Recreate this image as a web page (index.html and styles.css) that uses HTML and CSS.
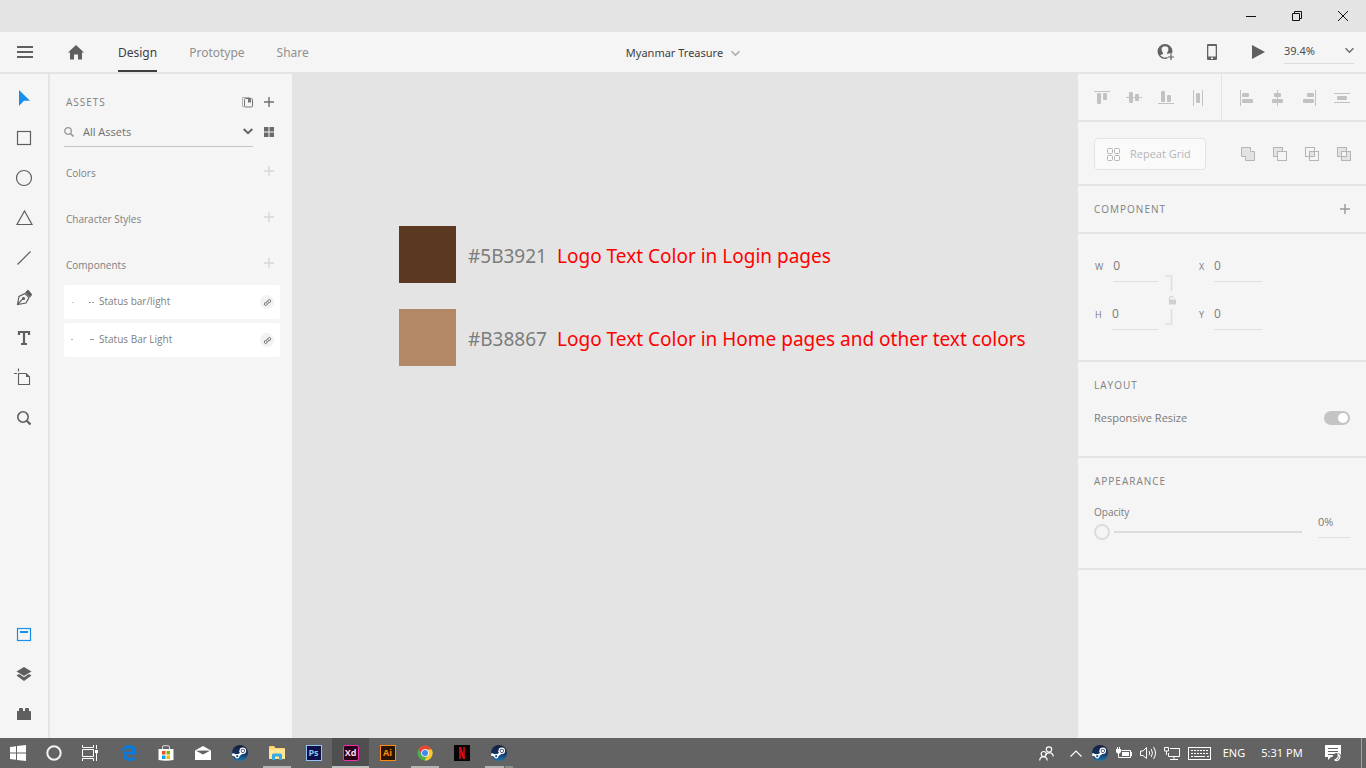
FILE: index.html
```html
<!DOCTYPE html>
<html lang="en">
<head>
<meta charset="utf-8">
<title>Myanmar Treasure</title>
<link rel="stylesheet" href="styles.css">
</head>
<body>
<svg class="defs" aria-hidden="true">
  <defs>
    <linearGradient id="steam-bg" x1="0" y1="0" x2="0" y2="1"><stop offset="0" stop-color="#16203c"/><stop offset=".5" stop-color="#14315f"/><stop offset="1" stop-color="#1a78b0"/></linearGradient>
    <symbol id="steam" viewBox="0 0 16 16">
      <circle cx="8" cy="8" r="8" fill="url(#steam-bg)"/>
      <path d="M0.2 9.2 5.2 11.2 9.6 8.2 8.2 5.6" fill="none" stroke="#fff" stroke-width="2.4"/>
      <circle cx="10.8" cy="5.8" r="3.3" fill="#fff"/><circle cx="10.8" cy="5.8" r="2.1" fill="#1b2c50"/><circle cx="10.8" cy="5.8" r="1.4" fill="#fff"/>
      <circle cx="5.2" cy="11.2" r="2.2" fill="#fff"/><circle cx="5.2" cy="11.2" r="1.1" fill="#1a5288"/>
    </symbol>
    <symbol id="plus" viewBox="0 0 10 10"><path d="M5 0V10M0 5H10" fill="none" stroke="currentColor" stroke-width="1.4"/></symbol>
    <symbol id="chevron" viewBox="0 0 8 6"><path d="M.5 1 4 4.6 7.500 1" fill="none" stroke="currentColor" stroke-width="1.3"/></symbol>
    <symbol id="link" viewBox="0 0 10 10"><g fill="none" stroke="#6e6e6e" stroke-width="1.1" stroke-linecap="round"><path d="M4.200 6 3.700 4.800 5.800 2.300Q7 1 8.100 2.100 9.200 3.200 8 4.400L7.200 5.300"/><path d="M5.800 4 6.300 5.200 4.200 7.700Q3 9 1.900 7.900 .8 6.800 2 5.600L2.800 4.700"/></g></symbol>
  </defs>
</svg>

<div class="app">
  <header class="titlebar">
    <button class="win-btn" aria-label="Minimize"><svg width="10" height="10"><path d="M0 5.500H10" stroke="#111" fill="none"/></svg></button>
    <button class="win-btn" aria-label="Restore"><svg width="10" height="10"><path d="M.5 2.500H7.500V9.500H.5ZM2.500 2.500V.5H9.500V7.500H7.500" stroke="#111" fill="none"/></svg></button>
    <button class="win-btn" aria-label="Close"><svg width="10" height="10"><path d="M0 0 10 10M10 0 0 10" stroke="#111" fill="none"/></svg></button>
  </header>

  <nav class="topbar">
    <div class="topbar-left">
      <button class="icon-btn menu-btn" aria-label="Menu"><svg width="16" height="12"><path d="M0 1H16M0 6H16M0 11H16" stroke="#5f5f5f" stroke-width="2"/></svg></button>
      <button class="icon-btn home-btn" aria-label="Home"><svg width="16" height="15"><path d="M8 0 16 7.500H14V14.500H10V9.500H6V14.500H2V7.500H0Z" fill="#5f5f5f"/></svg></button>
      <a class="tab active" href="#design">Design</a>
      <a class="tab" href="#prototype">Prototype</a>
      <a class="tab" href="#share">Share</a>
    </div>
    <button class="doc-title">Myanmar Treasure <svg class="soft" width="9" height="7"><use href="#chevron"/></svg></button>
    <div class="topbar-right">
      <button class="icon-btn" aria-label="Invite"><svg width="18" height="17"><circle cx="8" cy="7.500" r="6.800" fill="none" stroke="#636363" stroke-width="1.300"/><path d="M2.500 12Q4 10.500 6 10L6 9Q4.500 7.500 4.600 5 4.800 2.200 8 2.200 11.200 2.200 11.400 5 11.500 7.500 10 9V10Q12 10.500 13.500 12Q15.500 9.500 15 7 14 .7 8 .7 1.500 1 1.200 7 1 10 2.500 12" fill="#636363"/><path d="M10.500 9.500H18V17H10.500Z" fill="#f5f5f5"/><path d="M14 10V16M11 13H17" stroke="#636363" stroke-width="1.200"/></svg></button>
      <button class="icon-btn" aria-label="Device preview"><svg width="10" height="16"><path fill="#636363" fill-rule="evenodd" d="M1 0H9Q10 0 10 1V15Q10 16 9 16H1Q0 16 0 15V1Q0 0 1 0M1.300 2V12.500H8.700V2ZM4 13.500V15H6V13.500Z"/></svg></button>
      <button class="icon-btn" aria-label="Play"><svg width="13" height="14"><path d="M0 0 13 7 0 14Z" fill="#5f5f5f"/></svg></button>
      <div class="zoom">
        <select aria-label="Zoom level"><option>39.4%</option></select>
        <svg width="9" height="7"><use href="#chevron"/></svg>
      </div>
    </div>
  </nav>

  <div class="workspace">
    <aside class="tools">
      <button aria-label="Select"><svg width="24" height="24"><path d="M7 4 18 14.800 12 14.800 7 20Z" fill="#1790eb"/></svg></button>
      <button aria-label="Rectangle"><svg width="24" height="24"><rect x="5.500" y="5.500" width="13" height="13"/></svg></button>
      <button aria-label="Ellipse"><svg width="24" height="24"><circle cx="12" cy="12" r="7.500"/></svg></button>
      <button aria-label="Polygon"><svg width="24" height="24"><path d="M12.500 5 20 18.500H5Z"/></svg></button>
      <button aria-label="Line"><svg width="24" height="24"><path d="M5.500 18.500 18.500 5.500"/></svg></button>
      <button aria-label="Pen"><svg width="24" height="24"><path d="M5.500 18.500 7 10.500 13 7.500 17 11.500 14 17ZM5.500 18.500 11 12.700"/><circle cx="11.500" cy="12.500" r="1" fill="#5f5f5f"/><path d="M14 6.500 16 4.500 19.500 8.500 18 10.500Z" fill="#5f5f5f"/></svg></button>
      <button aria-label="Text"><svg width="24" height="24"><path d="M7 9V6H17V9M12 6V18M9 18H15" stroke-width="2.200"/></svg></button>
      <button aria-label="Artboard"><svg width="24" height="24"><path d="M6.500 7.500H14L17.500 11V18.500H6.500ZM6.500 2.500V5.500M2 7.500H5" stroke-width="1.100"/><path d="M14 7V11H18Z" fill="#5f5f5f" stroke="none"/></svg></button>
      <button aria-label="Zoom"><svg width="24" height="24"><circle cx="11" cy="11" r="5.200" stroke-width="1.600"/><path d="M14.800 14.800 18.500 18.500" stroke-width="2.200"/></svg></button>
      <span class="spacer"></span>
      <button aria-label="Assets"><svg width="24" height="24"><rect x="5.500" y="6.500" width="13" height="12" stroke="#1790eb"/><path d="M8 10H16" stroke="#1790eb" stroke-width="2"/></svg></button>
      <button aria-label="Layers"><svg width="24" height="24"><path d="M12 5 19.500 9.500 12 14 4.500 9.500ZM4.500 13.500 7 12 12 15.200 17 12 19.500 13.500 12 19Z" fill="#5f5f5f" stroke="none"/></svg></button>
      <button aria-label="Plugins"><svg width="24" height="24"><path d="M5 9H7V7Q7 6 8 6H10Q11 6 11 7V9H13V7Q13 6 14 6H16Q17 6 17 7V9H18Q19 9 19 10V18H5Z" fill="#5f5f5f" stroke="none"/></svg></button>
    </aside>

    <section class="assets">
      <div class="assets-head">
        <h2>ASSETS</h2>
        <button class="icon-btn" aria-label="Libraries"><svg width="11" height="11"><path d="M2 10H1Q.5 10 .5 9V1Q.5 .5 1 .5H8" fill="none" stroke="#b0b0b0"/><rect x="2.500" y="1.500" width="8" height="8.500" rx="1" fill="none" stroke="#767676"/><path d="M6 2H9V6L7.500 5 6 6Z" fill="#767676"/></svg></button>
        <button class="icon-btn" aria-label="Add asset"><svg width="10" height="10"><use href="#plus"/></svg></button>
      </div>
      <div class="search-row">
        <div class="search">
          <svg width="10" height="10"><circle cx="4" cy="4" r="3.300" fill="none" stroke="#999" stroke-width="1.300"/><path d="M6.500 6.500 9.500 9.500" stroke="#999" stroke-width="1.600"/></svg>
          <input type="text" value="All Assets" aria-label="Filter assets">
          <button class="icon-btn" aria-label="Asset types"><svg width="10" height="7"><path d="M.7 1 5 5.200 9.300 1" fill="none" stroke="#666" stroke-width="2"/></svg></button>
        </div>
        <button class="icon-btn view" aria-label="Grid view"><svg width="10" height="10" fill="#6a6a6a"><path d="M0 0H4.500V4.500H0ZM5.500 0H10V4.500H5.500ZM0 5.500H4.500V10H0ZM5.500 5.500H10V10H5.500Z"/></svg></button>
      </div>
      <div class="asset-group"><h3>Colors</h3><button class="icon-btn" aria-label="Add color"><svg width="10" height="10"><use href="#plus"/></svg></button></div>
      <div class="asset-group"><h3>Character Styles</h3><button class="icon-btn" aria-label="Add character style"><svg width="10" height="10"><use href="#plus"/></svg></button></div>
      <div class="asset-group"><h3>Components</h3><button class="icon-btn" aria-label="Add component"><svg width="10" height="10"><use href="#plus"/></svg></button></div>
      <ul class="components">
        <li><svg width="26" height="8"><path d="M2 4.500H4" stroke="#ccc"/><path d="M19 4.500H21M22 4.500H24" stroke="#999"/></svg><span>Status bar/light</span><i class="badge"><svg width="9" height="9"><use href="#link"/></svg></i></li>
        <li><svg width="26" height="8"><path d="M1 3.500H3" stroke="#aaa"/><path d="M20 3.500H24" stroke="#999"/></svg><span>Status Bar Light</span><i class="badge"><svg width="9" height="9"><use href="#link"/></svg></i></li>
      </ul>
    </section>

    <main class="canvas">
      <div class="swatch-row"><span class="swatch dark"></span><span class="hex">#5B3921</span><span class="note">Logo Text Color in Login pages</span></div>
      <div class="swatch-row"><span class="swatch tan"></span><span class="hex">#B38867</span><span class="note">Logo Text Color in Home pages and other text colors</span></div>
    </main>

    <aside class="inspector">
      <div class="align">
        <div class="align-set">
          <button aria-label="Align top"><svg width="16" height="16"><path d="M0 1.500H16"/><rect x="3" y="3" width="4" height="11" rx="1"/><rect x="9" y="3" width="4" height="7" rx="1"/></svg></button>
          <button aria-label="Align middle"><svg width="16" height="16"><path d="M0 7.500H16"/><rect x="3" y="2" width="4" height="11" rx="1"/><rect x="9" y="4" width="4" height="7" rx="1"/></svg></button>
          <button aria-label="Align bottom"><svg width="16" height="16"><path d="M0 13.500H16"/><rect x="3" y="1" width="4" height="11" rx="1"/><rect x="9" y="5" width="4" height="7" rx="1"/></svg></button>
          <button aria-label="Distribute horizontally"><svg width="16" height="16"><path d="M3.500 0V16M12.500 0V16"/><rect x="6" y="3" width="4" height="10" rx="1"/></svg></button>
        </div>
        <div class="align-set">
          <button aria-label="Align left"><svg width="16" height="16"><path d="M2.500 0V16"/><rect x="4" y="3" width="7" height="4" rx="1"/><rect x="4" y="9" width="11" height="4" rx="1"/></svg></button>
          <button aria-label="Align center"><svg width="16" height="16"><path d="M7.500 0V16"/><rect x="4" y="3" width="7" height="4" rx="1"/><rect x="2" y="9" width="11" height="4" rx="1"/></svg></button>
          <button aria-label="Align right"><svg width="16" height="16"><path d="M13.500 0V16"/><rect x="5" y="3" width="7" height="4" rx="1"/><rect x="1" y="9" width="11" height="4" rx="1"/></svg></button>
          <button aria-label="Distribute vertically"><svg width="16" height="16"><path d="M0 3.500H16M0 12.500H16"/><rect x="3" y="6" width="10" height="4" rx="1"/></svg></button>
        </div>
      </div>
      <div class="repeat">
        <button class="repeat-btn"><svg width="13" height="13" fill="none" stroke="#b5b5b5"><rect x=".5" y=".5" width="5" height="5" rx="1"/><rect x="7.500" y=".5" width="5" height="5" rx="1"/><rect x=".5" y="7.500" width="5" height="5" rx="1"/><rect x="7.500" y="7.500" width="5" height="5" rx="1"/></svg>Repeat Grid</button>
        <div class="bool">
          <button aria-label="Add"><svg width="14" height="14"><path d="M.5 .5H9.500V4.500H13.500V13.500H4.500V9.500H.5Z" fill="#e3e3e3"/></svg></button>
          <button aria-label="Subtract"><svg width="14" height="14"><rect x=".5" y=".5" width="9" height="9" fill="#e3e3e3"/><rect x="4.500" y="4.500" width="9" height="9" fill="#f5f5f5"/></svg></button>
          <button aria-label="Intersect"><svg width="14" height="14"><rect x=".5" y=".5" width="9" height="9" fill="none"/><rect x="4.500" y="4.500" width="9" height="9" fill="none"/><rect x="4.500" y="4.500" width="5" height="5" fill="#e3e3e3"/></svg></button>
          <button aria-label="Exclude overlap"><svg width="14" height="14"><rect x=".5" y=".5" width="9" height="9" fill="#e3e3e3"/><rect x="4.500" y="4.500" width="9" height="9" fill="#e3e3e3"/><rect x="4.500" y="4.500" width="5" height="5" fill="#f5f5f5"/></svg></button>
        </div>
      </div>
      <div class="component"><h2>COMPONENT</h2><button class="icon-btn mid" aria-label="Make component"><svg width="10" height="10"><use href="#plus"/></svg></button></div>
      <div class="transform">
        <div class="fields size">
          <div class="field"><label for="w">W</label><input id="w" type="text" value="0"></div>
          <div class="field"><label for="h">H</label><input id="h" type="text" value="0"></div>
        </div>
        <button class="icon-btn lock" aria-label="Lock aspect"><svg width="12" height="50" fill="none" stroke="#dedede"><path d="M1 1H7.500V16M7.500 34V49H1" stroke-width="1.600"/><path d="M5.500 25V22.500Q5.500 21.500 7.500 21.500 9.500 21.500 9.500 23" stroke="#d0d0d0"/><path d="M5 24.500H12V29.500H5Z" fill="#d0d0d0" stroke="none"/></svg></button>
        <div class="fields">
          <div class="field"><label for="x">X</label><input id="x" type="text" value="0"></div>
          <div class="field"><label for="y">Y</label><input id="y" type="text" value="0"></div>
        </div>
      </div>
      <div class="layout">
        <h2>LAYOUT</h2>
        <div class="resize-row"><label for="resize">Responsive Resize</label><input id="resize" class="toggle" type="checkbox" checked></div>
      </div>
      <div class="appearance">
        <h2>APPEARANCE</h2>
        <div class="opacity">
          <div class="opacity-slider"><label for="opacity">Opacity</label><input id="opacity" type="range" min="0" max="100" value="0"></div>
          <input class="opacity-value" type="text" value="0%" aria-label="Opacity value">
        </div>
      </div>
    </aside>
  </div>

  <footer class="taskbar">
    <div class="system">
      <button aria-label="Start"><svg width="16" height="16" fill="#fff"><path d="M0 2 6 1.200V7.500H0ZM7 1 16 0V7.500H7ZM0 8.500H6V14.800L0 14ZM7 8.500H16V16L7 15Z"/></svg></button>
      <button aria-label="Cortana"><svg width="16" height="16"><circle cx="8" cy="8" r="6.700" fill="none" stroke="#f2f2f2" stroke-width="2"/></svg></button>
      <button aria-label="Task view"><svg width="16" height="16" fill="none" stroke="#fff"><path d="M.5 0V2.500H11.500V0M.5 16V13.500H11.500V16M.5 4.500H11.500V11.500H.5ZM14.500 0V4M14.500 8V16"/><path d="M13 5H16V8H13Z" fill="#fff" stroke="none"/></svg></button>
    </div>
    <div class="apps">
      <button aria-label="Edge"><svg width="16" height="16"><path d="M0 7.500Q1 0 8.200 0 15.500 .3 15.500 7V9.500H5Q5.200 13 9.500 13 12 13 14.500 11.700V14.800Q12 16 8.500 16 2.300 15.500 2.200 10.200 2.300 6 6.500 4.200 5.300 5.500 5 6.800H10.800Q10.800 3.500 7.500 3.500 3 3.600 0 7.500Z" fill="#0a7bdc"/></svg></button>
      <button aria-label="Store"><svg width="16" height="16"><path d="M4.500 4V2Q4.500 .7 6 .7H10Q11.500 .7 11.500 2V4" fill="none" stroke="#ddd"/><path d="M.5 4H15.500V15Q8 16.500 .5 15Z" fill="#fff"/><path d="M4 6H7.500V9.500H4Z" fill="#f25022"/><path d="M8.500 6H12V9.500H8.500Z" fill="#7fba00"/><path d="M4 10.500H7.500V14H4Z" fill="#00a4ef"/><path d="M8.500 10.500H12V14H8.500Z" fill="#ffb900"/></svg></button>
      <button aria-label="Mail"><svg width="16" height="14"><path d="M0 4.500 8 0 16 4.500V14H0Z" fill="#fff"/><path d="M1 4.800 8 8.500 15 4.800 10 4.500Z" fill="#636363"/></svg></button>
      <button aria-label="Steam"><svg width="16" height="16"><use href="#steam"/></svg></button>
      <button class="open" aria-label="File Explorer"><svg width="16" height="14"><path d="M0 1Q0 0 1 0H5L6.500 2H15Q16 2 16 3V13H0Z" fill="#ffd66e"/><path d="M0 3H16V13H0Z" fill="#ffe596"/><path d="M3 14V9Q3 7.500 4.500 7.500H11.500Q13 7.500 13 9V14H10V10.500H6V14Z" fill="#36ace2"/></svg></button>
      <button aria-label="Photoshop"><span class="adobe ps">Ps</span></button>
      <button class="open current" aria-label="Adobe XD"><span class="adobe xd">Xd</span></button>
      <button aria-label="Illustrator"><span class="adobe ai">Ai</span></button>
      <button class="open" aria-label="Chrome"><svg width="16" height="16"><circle cx="8" cy="8" r="7.500" fill="#4caf50"/><path d="M1.500 4.200A7.500 7.500 0 0 1 14.500 4.400L8 5 5 10Z" fill="#ea4335"/><path d="M8 4.500H14.700A7.500 7.500 0 0 1 7.500 15.500L11 9Z" fill="#fcc934"/><circle cx="8" cy="8" r="3.800" fill="#fff"/><circle cx="8" cy="8" r="3" fill="#4285f4"/></svg></button>
      <button aria-label="Netflix"><svg width="16" height="16"><path d="M0 0H16V16H0Z" fill="#050505"/><path d="M5 2H7V14H5ZM9 2H11V14H9Z" fill="#b20710"/><path d="M5 2H7L11 14H9Z" fill="#e50914"/></svg></button>
      <button class="open stacked" aria-label="Steam window"><svg width="16" height="16"><use href="#steam"/></svg></button>
    </div>
    <div class="tray">
      <button class="people" aria-label="People"><svg width="15" height="15" fill="none" stroke="#fff" stroke-width="1.200"><circle cx="10" cy="3.500" r="2.700"/><path d="M6.500 9Q8 6.700 10.500 6.700 13.800 7 14.300 10.500"/><circle cx="4.700" cy="8" r="2.500"/><path d="M.7 14.500Q1 10.700 4.700 10.700 7.700 11 8.300 14.500"/></svg></button>
      <button aria-label="Show hidden icons"><svg width="12" height="7"><path d="M.5 6.500 6 1 11.500 6.500" fill="none" stroke="#fff" stroke-width="1.200"/></svg></button>
      <button aria-label="Steam"><svg width="16" height="16"><use href="#steam"/></svg></button>
      <button aria-label="Battery"><svg width="16" height="13"><path d="M5.500 3.500H14.500V10.500H5" fill="none" stroke="#fff"/><path d="M6 5H13V9H6ZM15 5H16V9H15ZM0 2H5V5L3.500 6.500H1.500L0 5ZM1 0H2V2H1ZM3 0H4V2H3Z" fill="#fff"/><path d="M2.500 6V10.500H5" fill="none" stroke="#fff"/></svg></button>
      <button aria-label="Volume"><svg width="17" height="14" fill="none" stroke="#fff"><path d="M.5 5V9.500H3L6.500 12.500V1.500L3 5Z"/><path d="M9 5Q10.300 7 9 9.200M11.200 3Q13.700 7 11.200 11M13.500 1Q17.500 7 13.500 13"/></svg></button>
      <button aria-label="Network"><svg width="16" height="14" fill="none" stroke="#fff"><path d="M6 2.500H15.500V10.500H4.500V7M10 10.500V13M6 13.500H14M.5 1.500H4.500V5H.5ZM2.500 5V9"/></svg></button>
      <button class="keyboard" aria-label="Touch keyboard"><svg width="23" height="13" fill="none" stroke="#fff"><rect x=".5" y=".5" width="22" height="12"/><path d="M3 3.500H21M3 6.500H21" stroke-dasharray="2 1"/><path d="M3 9.500H5M6 9.500H17M19 9.500H21"/></svg></button>
      <button class="lang">ENG</button>
      <button class="clock">5:31 PM</button>
      <button class="action" aria-label="Notifications"><svg width="17" height="17"><path d="M0 0H16V12H6L3 15V12H0Z" fill="#fff"/><path d="M3 3.500H13M3 6.500H13M3 9.500H9" stroke="#636363"/><circle cx="12" cy="12.500" r="4.500" fill="#636363"/><path d="M9.500 14.800A3.300 3.300 0 1 0 13.200 9.200 4.500 4.500 0 0 1 9.500 14.800" fill="none" stroke="#fff" stroke-width="1.200"/></svg></button>
      <button class="show-desktop" aria-label="Show desktop"></button>
    </div>
  </footer>
</div>
</body>
</html>
```

FILE: styles.css
```css
* { box-sizing: border-box; }
body, h2, h3, ul { margin: 0; padding: 0; }
body { font: 12px/16px "Noto Sans", "Open Sans", sans-serif; color: #6e6e6e; background: #e4e4e4; }
button, input, select { font: inherit; color: inherit; background: none; border: 0; margin: 0; padding: 0; outline: 0; }
svg { display: block; flex: none; }
.defs { position: absolute; width: 0; height: 0; }
h2 { font-size: 10px; font-weight: 400; line-height: 16px; letter-spacing: 1px; color: #808080; }
h3 { font-size: 10px; font-weight: 400; line-height: 16px; color: #808080; }
.icon-btn { display: flex; align-items: center; justify-content: center; }
.mid { color: #999; }

.app { display: flex; flex-direction: column; min-height: 100vh; }
.titlebar { display: flex; justify-content: flex-end; height: 32px; background: #e4e4e4; }
.win-btn { display: grid; place-items: center; width: 46px; }

.topbar { display: grid; grid-template-columns: 1fr auto 1fr; height: 42px; background: #f5f5f5; border-bottom: 2px solid #e4e4e4; }
.topbar-left { display: flex; align-items: stretch; }
.menu-btn { width: 50px; }
.home-btn { width: 52px; margin-right: 16px; }
.tab { display: flex; align-items: center; margin-right: 32px; color: #909090; text-decoration: none; border-bottom: 2px solid transparent; padding-top: 4px; }
.tab.active { color: #3e3e3e; border-bottom-color: #3e3e3e; }
.doc-title { display: flex; align-items: center; gap: 8px; padding-top: 2px; font-size: 11px; color: #3e3e3e; }
.soft { color: #aaa; }
.topbar-right { display: flex; justify-content: flex-end; padding-right: 12px; }
.topbar-right .icon-btn { width: 46px; }
.zoom { display: flex; align-items: center; width: 70px; height: 32px; margin-left: 3px; padding-top: 6px; border-bottom: 1px solid #dcdcdc; }
.zoom select { flex: 1; appearance: none; font-size: 11px; color: #4b4b4b; }

.workspace { flex: 1; display: flex; }
.tools { display: flex; flex-direction: column; width: 50px; padding: 4px 0; background: #f5f5f5; border-right: 2px solid #e4e4e4; }
.tools button { display: grid; place-items: center; height: 40px; }
.tools svg { fill: none; stroke: #5f5f5f; stroke-width: 1.2; }
.tools button:first-child svg { stroke: none; }
.spacer { flex: 1; }

.assets { width: 242px; padding: 18px 12px 0 14px; background: #f5f5f5; font-family: "Open Sans", "Noto Sans", sans-serif; }
.assets-head { display: flex; align-items: center; height: 20px; padding-left: 2px; }
.assets-head h2 { flex: 1; }
.assets-head .icon-btn { width: 22px; height: 20px; }
.search-row { display: flex; align-items: center; gap: 11px; height: 35px; padding-right: 6px; }
.search { flex: 1; display: flex; align-items: center; height: 35px; padding-top: 5px; border-bottom: 1px solid #c4c4c4; }
.search input { flex: 1; min-width: 0; padding-left: 9px; font-size: 11px; }
.view { padding-top: 4px; }
.asset-group { display: flex; align-items: center; justify-content: space-between; height: 46px; padding: 6px 6px 0 2px; }
.asset-group .icon-btn { color: #d8d8d8; height: 20px; margin-bottom: 4px; }
.components { display: flex; flex-direction: column; gap: 4px; list-style: none; }
.components li { display: flex; align-items: center; height: 34px; padding: 0 6px; background: #fff; border-radius: 2px; font-size: 10px; color: #808080; }
.components span { flex: 1; padding: 0 0 2px 3px; }
.badge { display: grid; place-items: center; width: 14px; height: 14px; border-radius: 50%; background: #f2f2f2; }

.canvas { flex: 1; display: flex; flex-direction: column; gap: 26px; padding: 152px 0 0 107px; background: #e4e4e4; font-size: 19px; line-height: 28px; }
.swatch-row { display: flex; align-items: center; }
.swatch { width: 57px; height: 57px; margin-right: 12px; }
.dark { background: #5b3921; }
.tan { background: #b38867; }
.hex { width: 89px; color: #7c7c7c; padding-top: 2px; }
.note { color: #f00; white-space: nowrap; padding-top: 2px; }

.inspector { width: 288px; background: #f5f5f5; font-family: "Open Sans", "Noto Sans", sans-serif; color: #7a7a7a; }
.inspector > div { border-bottom: 2px solid #e4e4e4; }
.align { display: flex; height: 48px; }
.align-set { display: flex; flex: 1; align-items: center; justify-content: space-between; padding: 2px 15px 0 16px; }
.align-set + .align-set { border-left: 1px solid #e4e4e4; padding-right: 16px; }
.align-set svg { fill: #c2c2c2; }
.align-set path { stroke: #c2c2c2; }
.repeat { display: flex; align-items: center; justify-content: space-between; height: 64px; padding: 2px 15px 0 16px; }
.repeat-btn { display: flex; align-items: center; gap: 10px; width: 112px; height: 32px; padding-left: 12px; border: 1px solid #e4e4e4; border-radius: 4px; background: #fafafa; color: #b5b5b5; font-size: 11px; }
.bool { display: flex; gap: 18px; }
.bool svg { stroke: #b5b5b5; }
.component { display: flex; align-items: center; justify-content: space-between; height: 48px; padding: 0 16px; }
.transform { display: flex; gap: 6px; height: 128px; padding: 16px 16px 0; }
.fields { display: flex; flex-direction: column; gap: 16px; width: 64px; }
.field { display: flex; align-items: stretch; gap: 8px; height: 32px; }
.size .field { gap: 10px; }
.field label { padding: 9px 0 0 1px; font-size: 9px; min-width: 8px; }
.field input { flex: 1; min-width: 0; border-bottom: 1px solid #e0e0e0; }
.lock { width: 12px; height: 50px; margin: 25px 16px 0 0; }
.layout { height: 96px; padding: 15px 16px 0; }
.resize-row { display: flex; align-items: center; justify-content: space-between; margin-top: 17px; font-size: 11px; }
.toggle { appearance: none; display: flex; align-items: center; justify-content: flex-end; width: 26px; height: 14px; padding: 2px; border-radius: 8px; background: #c4c4c4; }
.toggle::after { content: ""; width: 10px; height: 10px; border-radius: 50%; background: #fff; }
.toggle:not(:checked) { justify-content: flex-start; }
.appearance { height: 112px; padding: 15px 16px 0; }
.opacity { display: flex; align-items: center; gap: 16px; margin-top: 15px; }
.opacity-slider { flex: 1; display: flex; flex-direction: column; font-size: 10px; gap: 4px; }
.opacity-slider input { appearance: none; width: 100%; height: 16px; background: linear-gradient(#dcdcdc, #dcdcdc) 20px 7px / 100% 2px no-repeat; }
.opacity-slider input::-webkit-slider-thumb { appearance: none; width: 16px; height: 16px; border: 2px solid #dcdcdc; border-radius: 50%; background: #f5f5f5; }
.opacity-value { width: 32px; height: 32px; border-bottom: 1px solid #e0e0e0; font-size: 11px; }

.taskbar { display: flex; height: 30px; background: #636363; color: #fff; }
.taskbar button { display: grid; place-items: center; height: 30px; }
.system, .apps, .tray { display: flex; }
.system button { width: 36px; }
.apps { margin-left: 2px; }
.apps button { width: 37px; border-top: 2px solid transparent; border-bottom: 2px solid transparent; }
.apps .open { background: linear-gradient(#b4b4b4, #b4b4b4) center bottom / 28px 2px no-repeat border-box; }
.apps .current { background: linear-gradient(#c0c0c0, #c0c0c0) center bottom / 100% 2px no-repeat border-box, #4f4f4f border-box; }
.apps .stacked { background: linear-gradient(90deg, #b4b4b4 19px, #636363 19px 20px, #8c8c8c 20px) center bottom / 28px 2px no-repeat border-box; }
.adobe { display: grid; place-items: center; width: 16px; height: 16px; border: 1px solid; font: 700 9px/12px "Open Sans", sans-serif; }
.ps { color: #8fc3f5; background: #0c1048; }
.xd { color: #ffd9f2; background: #2c0019; border-color: #f02fb0; border-radius: 2px; }
.ai { color: #ff8a0c; background: #2a1300; }
.tray { margin-left: auto; }
.tray button { width: 24px; }
.tray .people { width: 36px; }
.tray .keyboard { width: 30px; }
.tray .lang { width: 40px; font-size: 11px; }
.tray .clock { width: 56px; font-size: 11px; }
.tray .action { width: 47px; }
.tray .show-desktop { width: 5px; margin-left: 4px; border-left: 1px solid #a0a0a0; }
```
